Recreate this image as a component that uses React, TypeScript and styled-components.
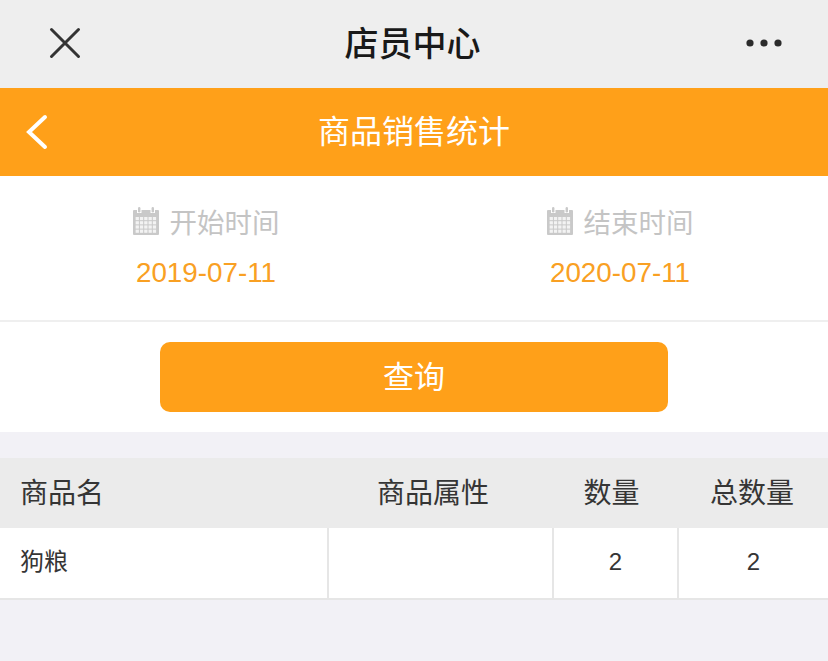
import React from 'react';
import styled, { createGlobalStyle } from 'styled-components';

const cjk = '"Noto Sans CJK SC", "Liberation Sans", sans-serif';

const GlobalStyle = createGlobalStyle`
  html, body {
    margin: 0;
    padding: 0;
    background: #f2f1f6;
  }
  body {
    font-family: ${cjk};
  }
`;

const Page = styled.div`
  width: 828px;
  height: 661px;
  overflow: hidden;
  background: #f2f1f6;
`;

const TopBar = styled.div`
  height: 88px;
  box-sizing: border-box;
  background: #eeeeee;
  display: flex;
  align-items: center;
  justify-content: space-between;
  padding: 0 46px 2px 48px;
`;

const TopTitle = styled.h1`
  margin: 0 3px 2px 0;
  font-size: 34px;
  line-height: 60px;
  font-weight: 500;
  color: #191919;
`;

const NavBar = styled.div`
  height: 88px;
  background: #ffa019;
  display: flex;
  align-items: center;
  padding-left: 25px;
`;

const NavTitle = styled.h2`
  flex: 1;
  margin: 0 0 0 -49px;
  padding-bottom: 6px;
  text-align: center;
  font-size: 32px;
  line-height: 60px;
  font-weight: 400;
  color: #fff;
`;

const Filters = styled.div`
  height: 146px;
  box-sizing: border-box;
  padding-top: 27px;
  background: #fff;
  display: grid;
  grid-template-columns: 412px 416px;
  border-bottom: 2px solid #efefef;
`;

const FilterCell = styled.div`
  display: flex;
  flex-direction: column;
  align-items: center;
`;

const FilterLabel = styled.div`
  display: flex;
  align-items: center;
  gap: 11px;
  height: 36px;
  font-size: 27.5px;
  line-height: 36px;
  color: #c4c4c4;
`;

const DateText = styled.div`
  margin-top: 16px;
  font-family: "Liberation Sans", Arial, sans-serif;
  font-size: 27.8px;
  line-height: 36px;
  color: #f9a023;
`;

const ButtonRow = styled.div`
  height: 110px;
  box-sizing: border-box;
  padding: 20px 160px;
  background: #fff;
`;

const QueryButton = styled.button`
  display: block;
  width: 100%;
  height: 70px;
  padding: 0 0 4px;
  border: 0;
  border-radius: 10px;
  background: #ffa019;
  color: #fff;
  font-family: ${cjk};
  font-size: 31px;
  line-height: 60px;
`;

const Table = styled.div`
  margin-top: 26px;
`;

const HeadRow = styled.div`
  height: 70px;
  background: #ebebeb;
  display: grid;
  grid-template-columns: 340px 186px 171px 110px;
  align-items: center;
  font-size: 28px;
  color: #353535;
`;

const HeadCell = styled.div<{ $left?: boolean }>`
  text-align: ${(p) => (p.$left ? 'left' : 'center')};
  padding: 0 0 4px ${(p) => (p.$left ? '20px' : '0')};
`;

const BodyRow = styled.div`
  height: 72px;
  box-sizing: border-box;
  background: #fff;
  display: grid;
  grid-template-columns: 329px 225px 125px 149px;
  border-bottom: 2px solid #e6e6e6;
`;

const BodyCell = styled.div<{ $left?: boolean; $last?: boolean }>`
  box-sizing: border-box;
  display: flex;
  align-items: center;
  justify-content: ${(p) => (p.$left ? 'flex-start' : 'center')};
  padding: 0 0 ${(p) => (p.$left ? '8px' : '2px')} ${(p) => (p.$left ? '20px' : '0')};
  border-right: ${(p) => (p.$last ? '0' : '2px solid #e6e6e6')};
  font-size: 24px;
  color: #353535;
`;

const Digit = styled.span`
  font-family: "Liberation Sans", Arial, sans-serif;
`;

const CloseIcon = () => (
  <svg width="34" height="34" viewBox="0 0 34 34" fill="none" stroke="#333" strokeWidth="3" strokeLinecap="round">
    <path d="M3.5 3.5 L30.5 30.5 M30.5 3.5 L3.5 30.5" />
  </svg>
);

const MoreIcon = () => (
  <svg width="36" height="10" viewBox="0 0 36 10" fill="#2b2b2b">
    <circle cx="4" cy="5" r="3.6" />
    <circle cx="18" cy="5" r="3.6" />
    <circle cx="32" cy="5" r="3.6" />
  </svg>
);

const BackIcon = () => (
  <svg width="24" height="36" viewBox="0 0 24 36" fill="none" stroke="#fff" strokeWidth="4" strokeLinecap="round">
    <path d="M20 3 L4 18 L20 33" />
  </svg>
);

const CalendarIcon = () => (
  <svg width="26" height="28" viewBox="0 0 26 28">
    <path
      fill="#c9c9c9"
      d="M1 3h3v3h4.5V3h9v3H22V3h3a1 1 0 0 1 1 1v23a1 1 0 0 1-1 1H1a1 1 0 0 1-1-1V4a1 1 0 0 1 1-1z"
    />
    <rect x="5" y="0" width="2.4" height="5.5" rx="1.2" fill="#c9c9c9" />
    <rect x="18.6" y="0" width="2.4" height="5.5" rx="1.2" fill="#c9c9c9" />
    {[0, 1, 2, 3].map((r) =>
      [0, 1, 2, 3, 4].map((c) => (
        <rect key={`${r}-${c}`} x={2.6 + c * 4.3} y={10 + r * 4.2} width="3.3" height="3.2" fill="#f3f3f3" />
      ))
    )}
  </svg>
);

const App = () => {
  return (
    <Page>
      <GlobalStyle />
      <TopBar>
        <CloseIcon />
        <TopTitle>店员中心</TopTitle>
        <MoreIcon />
      </TopBar>
      <NavBar>
        <BackIcon />
        <NavTitle>商品销售统计</NavTitle>
      </NavBar>
      <Filters>
        <FilterCell>
          <FilterLabel>
            <CalendarIcon />
            开始时间
          </FilterLabel>
          <DateText>2019-07-11</DateText>
        </FilterCell>
        <FilterCell>
          <FilterLabel>
            <CalendarIcon />
            结束时间
          </FilterLabel>
          <DateText>2020-07-11</DateText>
        </FilterCell>
      </Filters>
      <ButtonRow>
        <QueryButton>查询</QueryButton>
      </ButtonRow>
      <Table>
        <HeadRow>
          <HeadCell $left>商品名</HeadCell>
          <HeadCell>商品属性</HeadCell>
          <HeadCell>数量</HeadCell>
          <HeadCell>总数量</HeadCell>
        </HeadRow>
        <BodyRow>
          <BodyCell $left>狗粮</BodyCell>
          <BodyCell />
          <BodyCell>
            <Digit>2</Digit>
          </BodyCell>
          <BodyCell $last>
            <Digit>2</Digit>
          </BodyCell>
        </BodyRow>
      </Table>
    </Page>
  );
};

export default App;
